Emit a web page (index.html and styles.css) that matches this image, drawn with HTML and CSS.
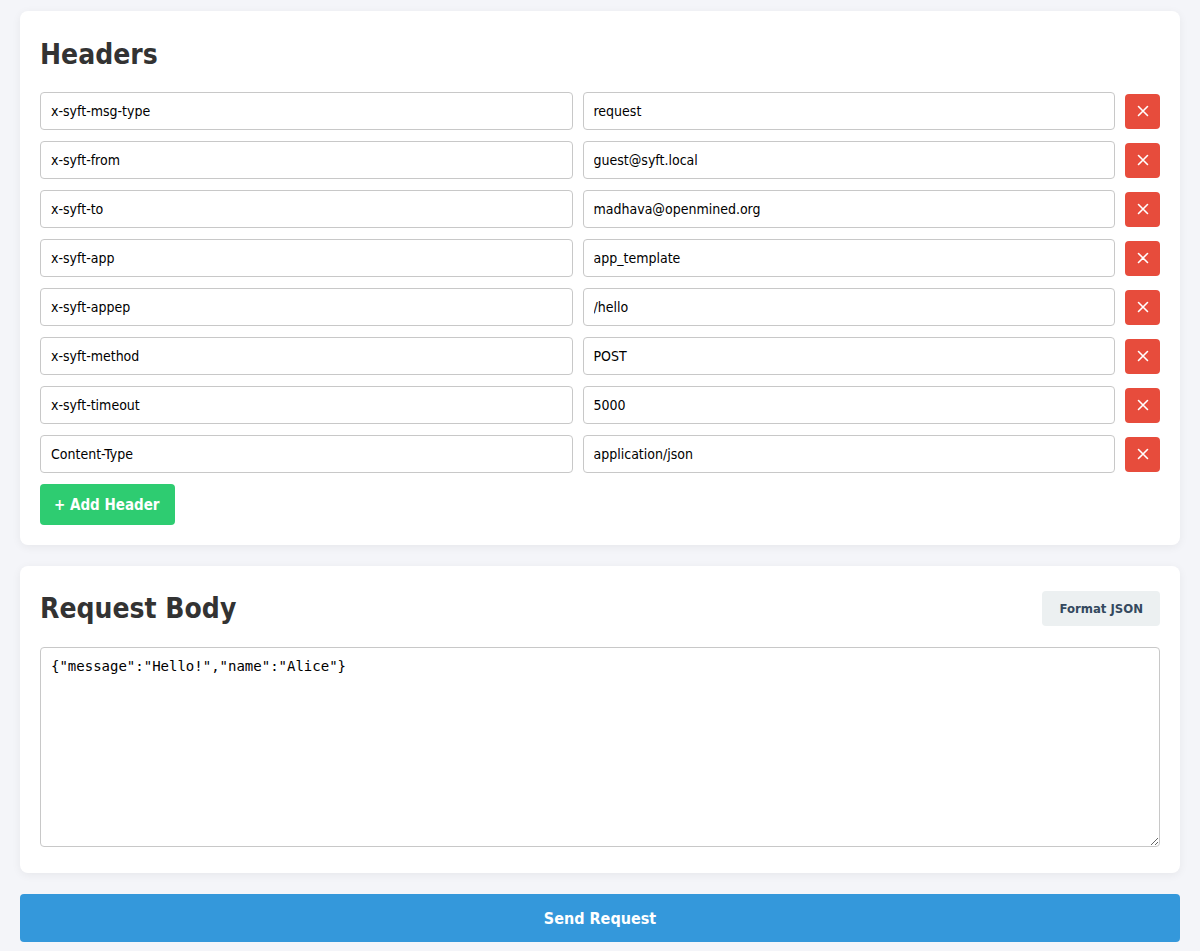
FILE: index.html
```html
<!DOCTYPE html>
<html>
<head>
<meta charset="utf-8">
<link rel="stylesheet" href="styles.css">
</head>
<body>
<div class="page">
  <section class="card">
    <h2 class="title">Headers</h2>
    <div class="rows">
      <div class="row"><input class="field" value="x-syft-msg-type"><input class="field" value="request"><button class="del"><svg viewBox="0 0 12 12" width="12" height="12"><path d="M1.5 1.5L10.5 10.5M10.5 1.5L1.5 10.5" stroke="#fff" stroke-width="1.6" stroke-linecap="round"/></svg></button></div>
      <div class="row"><input class="field" value="x-syft-from"><input class="field" value="guest@syft.local"><button class="del"><svg viewBox="0 0 12 12" width="12" height="12"><path d="M1.5 1.5L10.5 10.5M10.5 1.5L1.5 10.5" stroke="#fff" stroke-width="1.6" stroke-linecap="round"/></svg></button></div>
      <div class="row"><input class="field" value="x-syft-to"><input class="field" value="madhava@openmined.org"><button class="del"><svg viewBox="0 0 12 12" width="12" height="12"><path d="M1.5 1.5L10.5 10.5M10.5 1.5L1.5 10.5" stroke="#fff" stroke-width="1.6" stroke-linecap="round"/></svg></button></div>
      <div class="row"><input class="field" value="x-syft-app"><input class="field" value="app_template"><button class="del"><svg viewBox="0 0 12 12" width="12" height="12"><path d="M1.5 1.5L10.5 10.5M10.5 1.5L1.5 10.5" stroke="#fff" stroke-width="1.6" stroke-linecap="round"/></svg></button></div>
      <div class="row"><input class="field" value="x-syft-appep"><input class="field" value="/hello"><button class="del"><svg viewBox="0 0 12 12" width="12" height="12"><path d="M1.5 1.5L10.5 10.5M10.5 1.5L1.5 10.5" stroke="#fff" stroke-width="1.6" stroke-linecap="round"/></svg></button></div>
      <div class="row"><input class="field" value="x-syft-method"><input class="field" value="POST"><button class="del"><svg viewBox="0 0 12 12" width="12" height="12"><path d="M1.5 1.5L10.5 10.5M10.5 1.5L1.5 10.5" stroke="#fff" stroke-width="1.6" stroke-linecap="round"/></svg></button></div>
      <div class="row"><input class="field" value="x-syft-timeout"><input class="field" value="5000"><button class="del"><svg viewBox="0 0 12 12" width="12" height="12"><path d="M1.5 1.5L10.5 10.5M10.5 1.5L1.5 10.5" stroke="#fff" stroke-width="1.6" stroke-linecap="round"/></svg></button></div>
      <div class="row"><input class="field" value="Content-Type"><input class="field" value="application/json"><button class="del"><svg viewBox="0 0 12 12" width="12" height="12"><path d="M1.5 1.5L10.5 10.5M10.5 1.5L1.5 10.5" stroke="#fff" stroke-width="1.6" stroke-linecap="round"/></svg></button></div>
    </div>
    <button class="add">+ Add Header</button>
  </section>
  <section class="card body-card">
    <div class="body-head">
      <h2 class="title">Request Body</h2>
      <button class="fmt">Format JSON</button>
    </div>
    <textarea class="json">{"message":"Hello!","name":"Alice"}</textarea>
  </section>
  <button class="send">Send Request</button>
</div>
</body>
</html>
```

FILE: styles.css
```css
* { box-sizing: border-box; }
html, body { margin: 0; padding: 0; }
body {
  background: #f4f5f9;
  font-family: "DejaVu Sans Condensed", "DejaVu Sans", sans-serif;
  color: #333;
}
.page {
  padding: 11px 20px 10px;
  display: flex;
  flex-direction: column;
}
.card {
  background: #fff;
  border-radius: 8px;
  box-shadow: 0 2px 10px rgba(0,0,0,0.06);
  padding: 20px 20px 20px;
  margin-bottom: 21px;
}
.title {
  margin: 0;
  font-size: 28px;
  font-weight: bold;
  color: #333;
  line-height: 34px;
}
.card > .title { margin: 7px 0 20px; }
.rows { display: flex; flex-direction: column; gap: 11px; }
.row { display: flex; align-items: center; gap: 10px; }
.field {
  flex: 1;
  min-width: 0;
  height: 38px;
  border: 1px solid #c8c8c8;
  border-radius: 4px;
  padding: 0 10px;
  font-family: inherit;
  font-size: 14px;
  color: #000;
  background: #fff;
}
.del {
  width: 35px;
  height: 35px;
  flex: none;
  border: none;
  border-radius: 4px;
  background: #e74c3c;
  display: flex;
  align-items: center;
  justify-content: center;
  padding: 0;
}
.add {
  align-self: flex-start;
  margin-top: 11px;
  height: 41px;
  padding: 0 15px 0 14px;
  border: none;
  border-radius: 4px;
  background: #2ecc71;
  color: #fff;
  font-family: inherit;
  font-weight: bold;
  font-size: 15px;
}
.body-card { padding-bottom: 26px; }
.body-head {
  display: flex;
  align-items: center;
  justify-content: space-between;
  margin: 5px 0 21px;
}
.fmt {
  height: 35px;
  padding: 0 17px;
  border: none;
  border-radius: 4px;
  background: #ecf0f1;
  color: #34495e;
  font-family: inherit;
  font-weight: bold;
  font-size: 13px;
}
.json {
  display: block;
  width: 100%;
  height: 200px;
  border: 1px solid #c8c8c8;
  border-radius: 4px;
  padding: 10px;
  font-family: "DejaVu Sans Mono", monospace;
  font-size: 14px;
  color: #000;
  resize: vertical;
}
.send {
  height: 48px;
  border: none;
  border-radius: 4px;
  background: #3498db;
  color: #fff;
  font-family: inherit;
  font-weight: bold;
  font-size: 16px;
}
```
